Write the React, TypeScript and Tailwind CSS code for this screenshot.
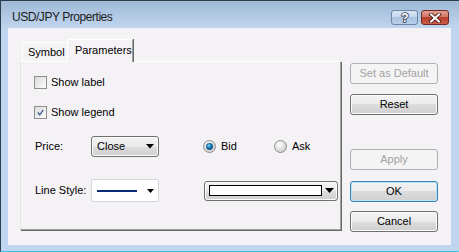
import React from "react";

const font = { fontFamily: '"Liberation Sans", Arial, sans-serif' };

function WinButton({
  label,
  disabled,
  isDefault,
  className = "",
}: {
  label: string;
  disabled?: boolean;
  isDefault?: boolean;
  className?: string;
}) {
  if (disabled) {
    return (
      <div
        className={`w-[88px] h-[21px] rounded-[3px] border border-[#adb2b5] bg-[#f4f4f4] flex items-center justify-center text-[11px] text-[#a3a3a3] ${className}`}
      >
        {label}
      </div>
    );
  }
  return (
    <div
      className={`w-[88px] h-[21px] rounded-[3px] border ${
        isDefault
          ? "border-[#3c7fb1] shadow-[inset_0_0_0_1px_#b9e3f9]"
          : "border-[#707070] shadow-[inset_0_0_0_1px_#fcfcfc]"
      } bg-[linear-gradient(#f2f2f2_0%,#ebebeb_50%,#dddddd_50%,#cfcfcf_100%)] flex items-center justify-center text-[11px] text-black ${className}`}
    >
      {label}
    </div>
  );
}

function Checkbox({ checked, label }: { checked?: boolean; label: string }) {
  return (
    <div className="h-[13px] flex items-center gap-[4px]">
      <div className="w-[13px] h-[13px] border border-[#8e8f8f] bg-[linear-gradient(135deg,#dcdcdc,#fbfbfb)] p-[2px] flex items-center justify-center">
        {checked && (
          <svg width="9" height="9" viewBox="0 0 9 9">
            <path d="M1 4.5 L3.5 7.5 L8 1" fill="none" stroke="#4a5f97" strokeWidth="1.8" />
          </svg>
        )}
      </div>
      <span className="text-[11px] text-black leading-none">{label}</span>
    </div>
  );
}

function Radio({ checked, label }: { checked?: boolean; label: string }) {
  return (
    <div className="flex items-center gap-[5px]">
      <svg width="13" height="13" viewBox="0 0 13 13">
        <defs>
          <radialGradient id="rg-off" cx="0.4" cy="0.35" r="0.7">
            <stop offset="0" stopColor="#ffffff" />
            <stop offset="1" stopColor="#c9c9c9" />
          </radialGradient>
          <radialGradient id="rg-on" cx="0.4" cy="0.35" r="0.6">
            <stop offset="0" stopColor="#8fdcff" />
            <stop offset="0.5" stopColor="#1c8bc9" />
            <stop offset="1" stopColor="#0c4f7f" />
          </radialGradient>
        </defs>
        <circle cx="6.5" cy="6.5" r="6" fill="url(#rg-off)" stroke="#8e8f8f" strokeWidth="1" />
        {checked && <circle cx="6.5" cy="6.5" r="3.2" fill="url(#rg-on)" stroke="#0f4b7a" strokeWidth="0.6" />}
      </svg>
      <span className="text-[11px] text-black leading-none">{label}</span>
    </div>
  );
}

export default function App() {
  return (
    <div
      style={font}
      className="w-[459px] h-[252px] overflow-hidden flex flex-col bg-[#bfd4ee] border-l border-t border-[#2d3d4e] border-b border-b-[#34c6e3]"
    >
      {/* title bar */}
      <div className="h-[27px] shrink-0 flex items-start bg-[linear-gradient(#9fb9d6,#c0d5ee)] pl-[11px] pr-[10px]">
        <span className="mt-[10px] text-[12px] leading-none text-[#1b1b1b] tracking-[-0.45px]">USD/JPY Properties</span>
        <div className="ml-auto mt-[9px] flex gap-[3px]">
          <div className="w-[27px] h-[15px] rounded-[3px] border border-[#6c86a6] bg-[linear-gradient(#d9e6f5_0%,#c2d5ec_50%,#a9c2e0_50%,#b9d0ea_100%)] flex items-center justify-center">
            <svg width="10" height="13" viewBox="0 0 10 13">
              <text
                x="5"
                y="11"
                textAnchor="middle"
                fontFamily="Liberation Sans, Arial, sans-serif"
                fontWeight="bold"
                fontSize="12"
                fill="#ffffff"
                stroke="#2f3d52"
                strokeWidth="1.6"
                paintOrder="stroke"
              >
                ?
              </text>
            </svg>
          </div>
          <div className="w-[28px] h-[15px] rounded-[3px] border border-[#6e2a24] bg-[linear-gradient(#e4a094_0%,#d0705e_50%,#b9402c_50%,#c95c48_100%)] flex items-center justify-center">
            <svg width="14" height="10" viewBox="0 0 14 10">
              <path d="M3 1.5 L11 8.5 M11 1.5 L3 8.5" stroke="#3b1410" strokeWidth="3.6" strokeLinecap="square" />
              <path d="M3 1.5 L11 8.5 M11 1.5 L3 8.5" stroke="#ffffff" strokeWidth="2" strokeLinecap="square" />
            </svg>
          </div>
        </div>
      </div>

      {/* client area */}
      <div className="flex-1 flex pl-[7px] pr-[8px] pb-[6px]">
        <div className="flex-1 bg-[#f5f2f5] flex">
          {/* tab control */}
          <div className="pl-[12px] pt-[12px] flex flex-col">
            <div className="h-[22px] pl-[2px] flex items-end relative z-10 -mb-px">
              <div className="w-[45px] h-[20px] border-t border-l border-[#ffffff] border-r-0 flex items-center pl-[5px] text-[11px] text-black bg-[#f5f2f5] shadow-[inset_0_-1px_0_#ffffff]">
                Symbol
              </div>
              <div className="w-[66px] h-[23px] border-t border-l border-[#ffffff] border-r border-r-[#a0a0a0] shadow-[1px_0_0_#696969] flex items-center pl-[7px] pb-[1px] text-[11px] text-black bg-[#f5f2f5]">
                Parameters
              </div>
            </div>
            <div className="w-[321px] h-[169px] border-t border-l border-t-[#ffffff] border-l-[#e4e4e4] border-r border-b border-r-[#a0a0a0] border-b-[#a0a0a0] shadow-[1px_1px_0_#696969] pl-[13px] pt-[14px] flex flex-col">
              <Checkbox label="Show label" />
              <div className="mt-[17px]">
                <Checkbox checked label="Show legend" />
              </div>

              <div className="mt-[17px] h-[21px] flex items-center">
                <span className="w-[57px] pl-px text-[11px] text-black">Price:</span>
                <div className="w-[68px] h-[21px] rounded-[3px] border border-[#707070] bg-[linear-gradient(#f2f2f2_0%,#ebebeb_50%,#dddddd_50%,#cfcfcf_100%)] shadow-[inset_0_0_0_1px_#fcfcfc] flex items-center pl-[5px] pr-[4px] text-[11px] text-black">
                  <span>Close</span>
                  <svg className="ml-auto" width="8" height="5" viewBox="0 0 8 5">
                    <path d="M0 0 L8 0 L4 4.5 Z" fill="#000" />
                  </svg>
                </div>
                <div className="ml-[44px] w-[71px]">
                  <Radio checked label="Bid" />
                </div>
                <Radio label="Ask" />
              </div>

              <div className="mt-[22px] h-[23px] flex items-center">
                <span className="w-[57px] pl-px text-[11px] text-black">Line Style:</span>
                <div className="w-[68px] h-[23px] rounded-[2px] border border-[#d2d7dd] bg-white flex items-center pl-[5px] pr-[4px]">
                  <div className="w-[40px] h-[2px] bg-[#0c2a7a]" />
                  <svg className="ml-auto" width="7" height="4" viewBox="0 0 7 4">
                    <path d="M0 0 L7 0 L3.5 4 Z" fill="#000" />
                  </svg>
                </div>
                <div className="ml-[45px] w-[134px] h-[20px] rounded-[3px] border border-[#707070] bg-[linear-gradient(#f2f2f2_0%,#ebebeb_50%,#dddddd_50%,#cfcfcf_100%)] shadow-[inset_0_0_0_1px_#fcfcfc] flex items-center pl-[4px] pr-[3px]">
                  <div className="w-[113px] h-[11px] border border-black bg-white" />
                  <svg className="ml-auto" width="9" height="5" viewBox="0 0 9 5">
                    <path d="M0 0 L9 0 L4.5 5 Z" fill="#000" />
                  </svg>
                </div>
              </div>
            </div>
          </div>

          {/* buttons */}
          <div className="ml-[9px] pt-[35px] flex flex-col">
            <WinButton label="Set as Default" disabled />
            <WinButton label="Reset" className="mt-[10px]" />
            <WinButton label="Apply" disabled className="mt-[34px]" />
            <WinButton label="OK" isDefault className="mt-[11px]" />
            <WinButton label="Cancel" className="mt-[9px]" />
          </div>
        </div>
      </div>
    </div>
  );
}
